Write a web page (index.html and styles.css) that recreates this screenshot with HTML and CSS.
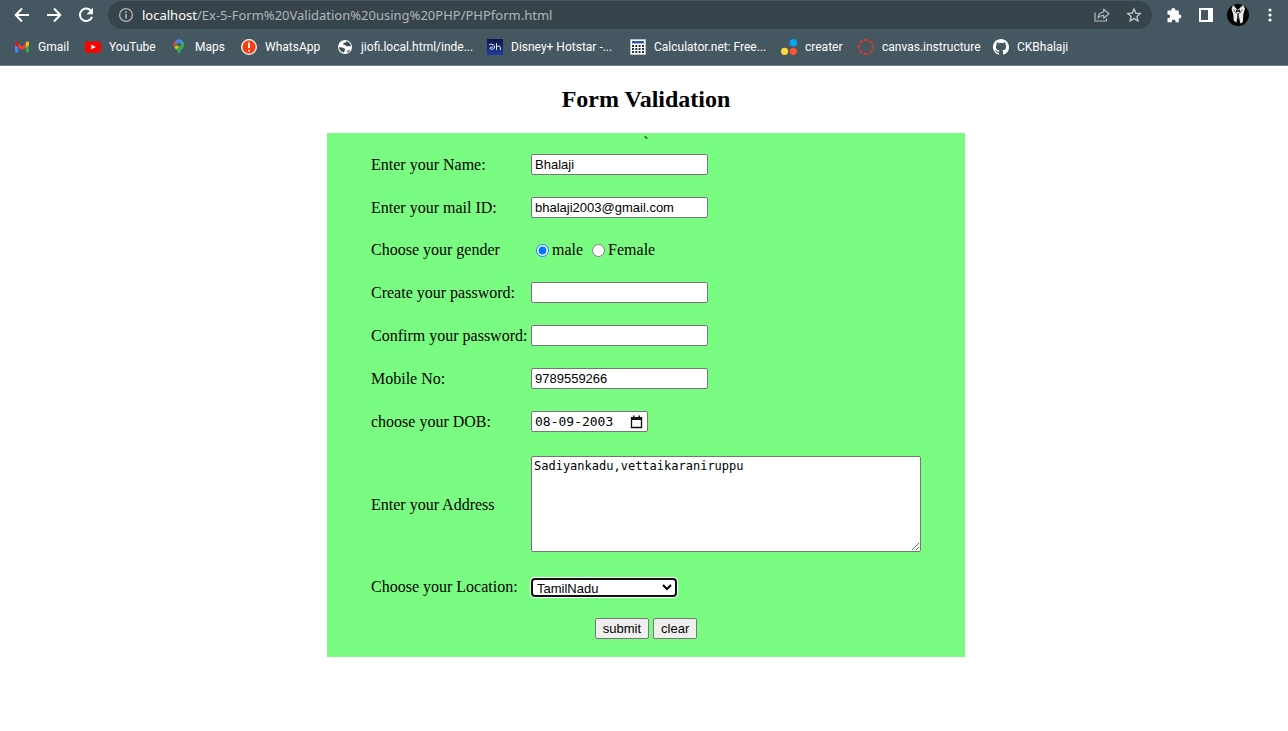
FILE: index.html
```html
<!DOCTYPE html>
<html lang="en">
<head>
<meta charset="utf-8">
<title>Form Validation</title>
<link rel="stylesheet" href="styles.css">
</head>
<body>
<header class="browser">
  <div class="toolbar">
    <div class="nav">
      <button type="button" class="icon-btn" aria-label="Back"><svg width="16" height="16" viewBox="0 0 16 16"><path d="M15 8H2M8 1.500L1.700 8 8 14.500" fill="none" stroke="#fff" stroke-width="2"/></svg></button>
      <button type="button" class="icon-btn" aria-label="Forward"><svg width="16" height="16" viewBox="0 0 16 16"><path d="M1 8h13M8 1.500L14.300 8 8 14.500" fill="none" stroke="#fff" stroke-width="2"/></svg></button>
      <button type="button" class="icon-btn" aria-label="Reload"><svg width="16" height="16" viewBox="0 0 16 16"><path d="M13.200 4.200A6.200 6.200 0 1 0 14 9.800" fill="none" stroke="#fff" stroke-width="2"/><path d="M15 .8v6.400H8.600z" fill="#fff"/></svg></button>
    </div>
    <div class="address">
      <svg width="16" height="16" viewBox="0 0 16 16"><circle cx="8" cy="8" r="6.400" fill="none" stroke="#aeb5b9" stroke-width="1.300"/><path d="M8 7v4.500M8 4.300v1.600" stroke="#aeb5b9" stroke-width="1.600"/></svg>
      <span class="url"><span class="host">localhost</span>/Ex-5-Form%20Validation%20using%20PHP/PHPform.html</span>
      <button type="button" class="icon-btn" aria-label="Share"><svg width="16" height="16" viewBox="0 0 16 16"><path d="M1 5.500V14h11.500v-2.500" fill="none" stroke="#b4babd" stroke-width="1.200"/><path d="M4 11c.4-4 2.500-5.800 5.700-6V2.200L15 6.700l-5.300 4.500V8.400C7 8.400 5.400 9.200 4 11z" fill="none" stroke="#b4babd" stroke-width="1.200" stroke-linejoin="round"/></svg></button>
      <button type="button" class="icon-btn" aria-label="Bookmark this page"><svg width="16" height="16" viewBox="0 0 16 16"><path d="M8 1.900l1.800 4.200 4.500.4-3.400 3 1 4.400L8 11.600l-3.900 2.300 1-4.400-3.400-3 4.500-.4z" fill="none" stroke="#c2c7ca" stroke-width="1.300"/></svg></button>
    </div>
    <div class="tools">
      <button type="button" class="icon-btn" aria-label="Extensions"><svg width="16" height="16" viewBox="0 0 16 16"><path d="M1.500 3.600h3.700V3a2.100 2.100 0 0 1 4.200 0v.6h3.400v3.800h.5a2.050 2.050 0 0 1 0 4.100h-.5v3.700H9.600v-.8a1.900 1.900 0 0 0-3.800 0v.8H1.500v-4h.8a1.900 1.900 0 0 0 0-3.800h-.8z" fill="#fff"/></svg></button>
      <button type="button" class="icon-btn" aria-label="Side panel"><svg width="16" height="16" viewBox="0 0 16 16"><path d="M1 1h14v14H1zM3 3v10h7V3z" fill="#fff" fill-rule="evenodd"/></svg></button>
      <button type="button" class="icon-btn" aria-label="Profile"><svg width="22" height="22" viewBox="0 0 22 22"><circle cx="11" cy="11" r="11" fill="#050505"/><path d="M6 .9L10.800 6 16 .9l2 3.600-1.800 6.200-.3 7.300-2.600 1.500-2-10.500-.6 0-1.200 9.500-2.700-1.800L6.200 10 4.500 5z" fill="#e9e9e9"/><path d="M6.500 5.500l3 4M15.500 5.500l-3 4M11 9v6" stroke="#555" stroke-width="1"/><path d="M9 5.200l2 1.200 2-1.200v3.200l-2-1-2 1z" fill="#111"/></svg></button>
      <button type="button" class="icon-btn" aria-label="Menu"><svg width="16" height="16" viewBox="0 0 16 16"><circle cx="8" cy="3" r="1.600" fill="#fff"/><circle cx="8" cy="8" r="1.600" fill="#fff"/><circle cx="8" cy="13" r="1.600" fill="#fff"/></svg></button>
    </div>
  </div>
  <nav class="bookmarks">
    <a href="#"><svg width="16" height="16" viewBox="0 0 16 16"><path d="M1 4v8.700c0 .4.300.7.700.7h2.500V6.500z" fill="#4285f4"/><path d="M15 4v8.700c0 .4-.3.700-.7.700h-2.500V6.500z" fill="#34a853"/><path d="M4.200 4.400L8 7.200l3.800-2.800v4.100L8 11.300 4.200 8.500z" fill="#ea4335"/><path d="M1 4.200c0-1.600 1.500-2.200 2.600-1.300l.6.500v5.100L1 6.100z" fill="#c5221f"/><path d="M15 4.200c0-1.600-1.500-2.200-2.600-1.300l-.6.500v5.100L15 6.100z" fill="#fbbc04"/></svg>Gmail</a>
    <a href="#"><svg width="16" height="16" viewBox="0 0 16 16"><rect y="2.500" width="16" height="11.200" rx="2.500" fill="#f00"/><path d="M6.300 5.600v5L10.700 8.100z" fill="#fff"/></svg>YouTube</a>
    <a href="#"><svg width="16" height="16" viewBox="0 0 16 16"><path d="M8 .5a5.200 5.200 0 0 1 5.200 5.200C13.200 9.300 9 11 8 15.500 7 11 2.800 9.300 2.800 5.700A5.200 5.200 0 0 1 8 .5z" fill="#34a853"/><path d="M3.300 8l6.500-7.200A5.200 5.200 0 0 0 4 2.400 5.200 5.200 0 0 0 3.300 8z" fill="#4285f4"/><path d="M4 2.400L6.300 4.300 3.300 8a5.200 5.200 0 0 1 .7-5.600z" fill="#ea4335"/><path d="M3.300 8L10 5.800 5 10.600z" fill="#fbbc04"/><path d="M6.500.8A5.200 5.200 0 0 1 12.600 3.200L9.500 5z" fill="#4285f4"/><circle cx="8" cy="5.600" r="1.900" fill="#455761"/></svg>Maps</a>
    <a href="#"><svg width="16" height="16" viewBox="0 0 16 16"><circle cx="8" cy="8" r="7.300" fill="#fc3d0b" stroke="#fff" stroke-width="1.300"/><path d="M8 3.500v5.600M8 10.700v1.900" stroke="#fff" stroke-width="1.900"/></svg>WhatsApp</a>
    <a href="#"><svg width="16" height="16" viewBox="0 0 16 16"><circle cx="8" cy="8" r="7" fill="#fff"/><path d="M1.800 8.300l3.400.1c1 .1 1.100.9 2 1 1.200 0 1.300.8.700 1.500L7 13.500l-2-.4C3.300 12 2.200 10.300 1.800 8.300zM9.500 2.300L8.300 3.700l-1.700.4-.4 1.600 1.800.4c.8.200.9 1.100 1.900 1.100h3.300L14 6.500c-.7-2.200-2.300-3.800-4.500-4.200zM9.500 12.800l2.900-2 .5.600-2 2z" fill="#3f5059"/></svg>jiofi.local.html/inde...</a>
    <a href="#"><svg width="16" height="16" viewBox="0 0 16 16"><defs><linearGradient id="hotstar" x2="0" y2="1"><stop stop-color="#0b1746"/><stop offset="1" stop-color="#1c3d9b"/></linearGradient></defs><path d="M0 0h16v16H0z" fill="url(#hotstar)"/><path d="M2.200 5.500c3.200-.8 5.300.3 5.300 2.500 0 2.400-3.800 2.900-4.600 1.500-.5-1 1.500-1.600 3.200-1.300M9.500 4v7M9.600 8c1.400-1.500 3.800-1.500 3.800.6V11" fill="none" stroke="#e6ebf5" stroke-width="1"/></svg>Disney+ Hotstar -...</a>
    <a href="#"><svg width="16" height="16" viewBox="0 0 16 16"><path d="M.5.500h15v15H.5z" fill="#fff" stroke="#b9bfc2"/><path d="M2 2h12v2.500H2z" fill="#245fa6"/><path d="M2 6h2v2H2zm3.300 0h2v2h-2zm3.300 0h2v2h-2zM12 6h2v2h-2zM2 9h2v2H2zm3.300 0h2v2h-2zm3.300 0h2v2h-2zM12 9h2v2h-2zM2 12h2v2H2zm3.300 0h2v2h-2zm3.300 0h2v2h-2zM12 12h2v2h-2z" fill="#26313a"/></svg>Calculator.net: Free...</a>
    <a href="#"><svg width="16" height="16" viewBox="0 0 16 16"><circle cx="12.300" cy="3.800" r="3.700" fill="#00a3f5"/><circle cx="3.600" cy="12.300" r="3.600" fill="#ffd93a"/><circle cx="12.300" cy="12.300" r="3.600" fill="#f9572c"/></svg>creater</a>
    <a href="#"><svg width="16" height="16" viewBox="0 0 16 16"><circle cx="8" cy="8" r="7.100" fill="none" stroke="#e4372b" stroke-width="1.700" stroke-dasharray="4.100 1.480" stroke-dashoffset="2"/></svg>canvas.instructure</a>
    <a href="#"><svg width="16" height="16" viewBox="0 0 16 16"><path fill="#fff" d="M8 0C3.580 0 0 3.580 0 8c0 3.540 2.290 6.530 5.470 7.590.4.070.55-.17.55-.38 0-.19-.01-.82-.01-1.490-2.010.37-2.530-.49-2.690-.94-.09-.23-.48-.94-.82-1.130-.28-.15-.68-.52-.01-.53.63-.01 1.080.58 1.230.82.72 1.210 1.870.87 2.330.66.070-.52.280-.87.510-1.070-1.780-.2-3.640-.89-3.640-3.950 0-.87.310-1.590.82-2.150-.08-.2-.36-1.020.08-2.120 0 0 .67-.21 2.200.82a7.600 7.600 0 0 1 4 0c1.530-1.040 2.200-.82 2.200-.82.44 1.100.16 1.920.08 2.120.51.56.82 1.270.82 2.150 0 3.070-1.870 3.750-3.650 3.950.29.25.54.73.54 1.480 0 1.070-.01 1.930-.01 2.200 0 .21.150.46.550.38A8.010 8.010 0 0 0 16 8c0-4.420-3.580-8-8-8z"/></svg>CKBhalaji</a>
  </nav>
</header>
<main class="page">
  <h2 class="title">Form Validation</h2>
  <form class="card">
    <div class="tick">`</div>
    <div class="fields">
      <label for="name">Enter your Name:</label>
      <input class="box" id="name" type="text" value="Bhalaji">
      <label for="mail">Enter your mail ID:</label>
      <input class="box" id="mail" type="text" value="bhalaji2003@gmail.com">
      <span id="gender">Choose your gender</span>
      <div class="radios" role="radiogroup" aria-labelledby="gender">
        <input type="radio" name="gender" id="male" checked><label for="male">male</label>
        <input type="radio" name="gender" id="female"><label for="female">Female</label>
      </div>
      <label for="pass">Create your password:</label>
      <input class="box" id="pass" type="password">
      <label for="confirm">Confirm your password:</label>
      <input class="box" id="confirm" type="password">
      <label for="mobile">Mobile No:</label>
      <input class="box" id="mobile" type="text" value="9789559266">
      <label for="dob">choose your DOB:</label>
      <div class="date">
        <input class="date-text" id="dob" type="text" value="08-09-2003">
        <button type="button" class="icon-btn" aria-label="Show date picker"><svg width="13" height="14" viewBox="0 0 13 14"><path d="M1.500 3h10v9.500h-10z" fill="none" stroke="#111" stroke-width="1.300"/><path d="M1 2h11v3H1zM3 .5h1.500V2H3zM8.500.5H10V2H8.500z" fill="#111"/></svg></button>
      </div>
      <label for="address">Enter your Address</label>
      <textarea class="area" id="address" spellcheck="false">Sadiyankadu,vettaikaraniruppu</textarea>
      <label for="location">Choose your Location:</label>
      <select class="location" id="location"><option>TamilNadu</option></select>
    </div>
    <div class="actions">
      <button class="btn" type="submit">submit</button>
      <button class="btn" type="reset">clear</button>
    </div>
  </form>
</main>
</body>
</html>
```
FILE: styles.css
```css
* { box-sizing: border-box; }
body { margin: 0; background: #fff; color: #000; font: 16px/20px "Liberation Serif", "Times New Roman", serif; }
svg { display: block; flex: none; }

.browser { background: #455761; border-bottom: 1px solid #718087; color: #fff; font-family: "Noto Sans", "Open Sans", sans-serif; height: 66px; }
.icon-btn { display: flex; padding: 0; border: 0; background: none; }
.toolbar { display: flex; align-items: center; padding: 1px 10px 0 14px; }
.nav { display: flex; gap: 16px; margin-right: 14px; }
.address { flex: 1; display: flex; align-items: center; height: 28px; padding: 0 10px; border-radius: 14px; background: #38444b; }
.url { flex: 1; margin-left: 8px; font-size: 13px; line-height: 20px; color: #b1b7ba; white-space: nowrap; }
.host { color: #fff; }
.address .icon-btn + .icon-btn { margin-left: 16px; }
.tools { display: flex; align-items: center; gap: 13px; margin-left: 14px; }
.tools .icon-btn:first-child { margin-right: 3px; }
.bookmarks { display: grid; grid-template-columns: 71px 86px 70px 96px 150px 143px 151px 77px 135px auto; padding: 8px 14px 0; }
.bookmarks a { display: flex; align-items: center; gap: 8px; color: #fff; font-family: Roboto, sans-serif; font-size: 12px; line-height: 20px; text-decoration: none; white-space: nowrap; }

.page { display: flex; flex-direction: column; align-items: center; padding-left: 4px; }
.title { margin: 20px 0; font-size: 24px; line-height: 27px; }
.card { padding: 0 44px 18px; background: #7afc82; }
.tick { height: 21px; line-height: 20px; text-align: center; }
.fields { display: grid; grid-template-columns: 156px auto; column-gap: 4px; row-gap: 22px; align-items: center; justify-items: start; white-space: nowrap; }
.box, .date, .area { border: 1px solid #767676; border-radius: 2px; background: #fff; color: #000; }
.box { width: 177px; height: 21px; padding: 1px 3px; font: 13px "Liberation Sans", Arial, sans-serif; }
.radios { display: flex; align-items: center; height: 20px; }
.radios input { width: 13px; height: 13px; margin: 0 3px 0 5px; }
.radios label + input { margin-left: 9px; }
.date { display: flex; align-items: center; justify-content: space-between; width: 117px; height: 21px; padding: 0 4px 0 3px; }
.date-text { width: 84px; padding: 0; border: 0; background: none; font: 13px "DejaVu Sans Mono", monospace; }
.area { width: 390px; height: 96px; margin: 2px 0 3px; padding: 2px; font: 12px/15px "DejaVu Sans Mono", monospace; resize: both; }
.location { width: 146px; height: 19px; padding: 0; border: 2px solid #101010; border-radius: 4px; background: #fff; box-shadow: 0 0 0 1px #fff; color: #000; font: 13px "Liberation Sans", Arial, sans-serif; }
.actions { display: flex; justify-content: center; gap: 4px; margin-top: 21px; }
.btn { height: 21px; padding: 0 7px; border: 1px solid #767676; border-radius: 2px; background: #efefef; color: #000; font: 13px "Liberation Sans", Arial, sans-serif; }
```
